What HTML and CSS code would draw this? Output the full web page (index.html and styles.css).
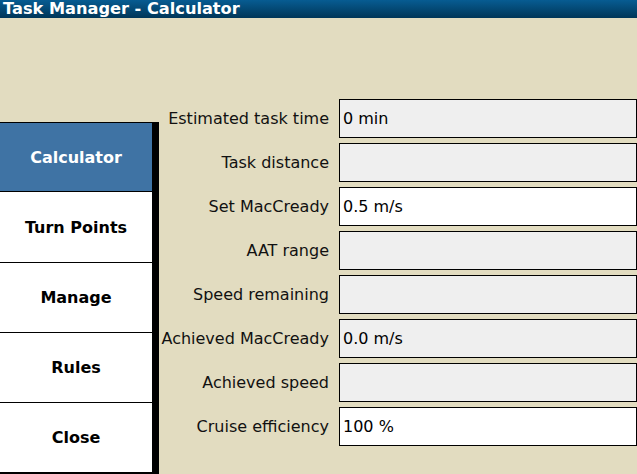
FILE: index.html
```html
<!DOCTYPE html>
<html>
<head>
<meta charset="utf-8">
<title>Task Manager - Calculator</title>
<link rel="stylesheet" href="styles.css">
</head>
<body>
<div class="titlebar">Task Manager - Calculator</div>
<div class="main">
  <nav class="tabs">
    <div class="tab selected">Calculator</div>
    <div class="tab second">Turn Points</div>
    <div class="tab">Manage</div>
    <div class="tab">Rules</div>
    <div class="tab">Close</div>
  </nav>
  <section class="form">
    <div class="row"><span class="label">Estimated task time</span><span class="field ro">0 min</span></div>
    <div class="row"><span class="label">Task distance</span><span class="field ro"></span></div>
    <div class="row"><span class="label">Set MacCready</span><span class="field">0.5 m/s</span></div>
    <div class="row"><span class="label">AAT range</span><span class="field ro"></span></div>
    <div class="row"><span class="label">Speed remaining</span><span class="field ro"></span></div>
    <div class="row"><span class="label">Achieved MacCready</span><span class="field ro">0.0 m/s</span></div>
    <div class="row"><span class="label">Achieved speed</span><span class="field ro"></span></div>
    <div class="row"><span class="label">Cruise efficiency</span><span class="field">100 %</span></div>
  </section>
</div>
</body>
</html>
```
FILE: styles.css
```css
html, body {
  margin: 0;
  padding: 0;
}
body {
  width: 637px;
  height: 474px;
  overflow: hidden;
  background: #e2dcc0;
  font-family: "DejaVu Sans", sans-serif;
  color: #000;
}
.titlebar {
  height: 18px;
  line-height: 17px;
  padding-left: 3px;
  color: #fff;
  font-weight: bold;
  font-size: 16.2px;
  background: linear-gradient(#075c92, #003658);
  white-space: nowrap;
}
.main {
  display: flex;
  height: 456px;
}
.tabs {
  margin-top: 104px;
  width: 152px;
  height: 350px;
  border-right: 7px solid #000;
  border-bottom: 2px solid #000;
  background: #fff;
  display: flex;
  flex-direction: column;
  flex: none;
}
.tab {
  box-sizing: border-box;
  height: 70px;
  border-top: 1px solid #000;
  display: flex;
  align-items: center;
  justify-content: center;
  font-weight: bold;
  font-size: 16px;
  color: #000;
}
.tab.selected {
  background: #3f73a4;
  color: #fff;
  border-bottom: 1px solid #000;
}
.tab.second {
  border-top: none;
}
.form {
  margin-top: 81px;
  display: flex;
  flex-direction: column;
  gap: 5px;
  flex: 1;
}
.row {
  display: flex;
  align-items: center;
  height: 39px;
}
.label {
  width: 170px;
  padding-right: 10px;
  text-align: right;
  font-size: 16px;
  white-space: nowrap;
  color: #111;
}
.field {
  box-sizing: border-box;
  width: 298px;
  height: 39px;
  border: 1px solid #000;
  background: #fff;
  padding-left: 3px;
  display: flex;
  align-items: center;
  font-size: 16px;
}
.field.ro {
  background: #efefef;
}
```
